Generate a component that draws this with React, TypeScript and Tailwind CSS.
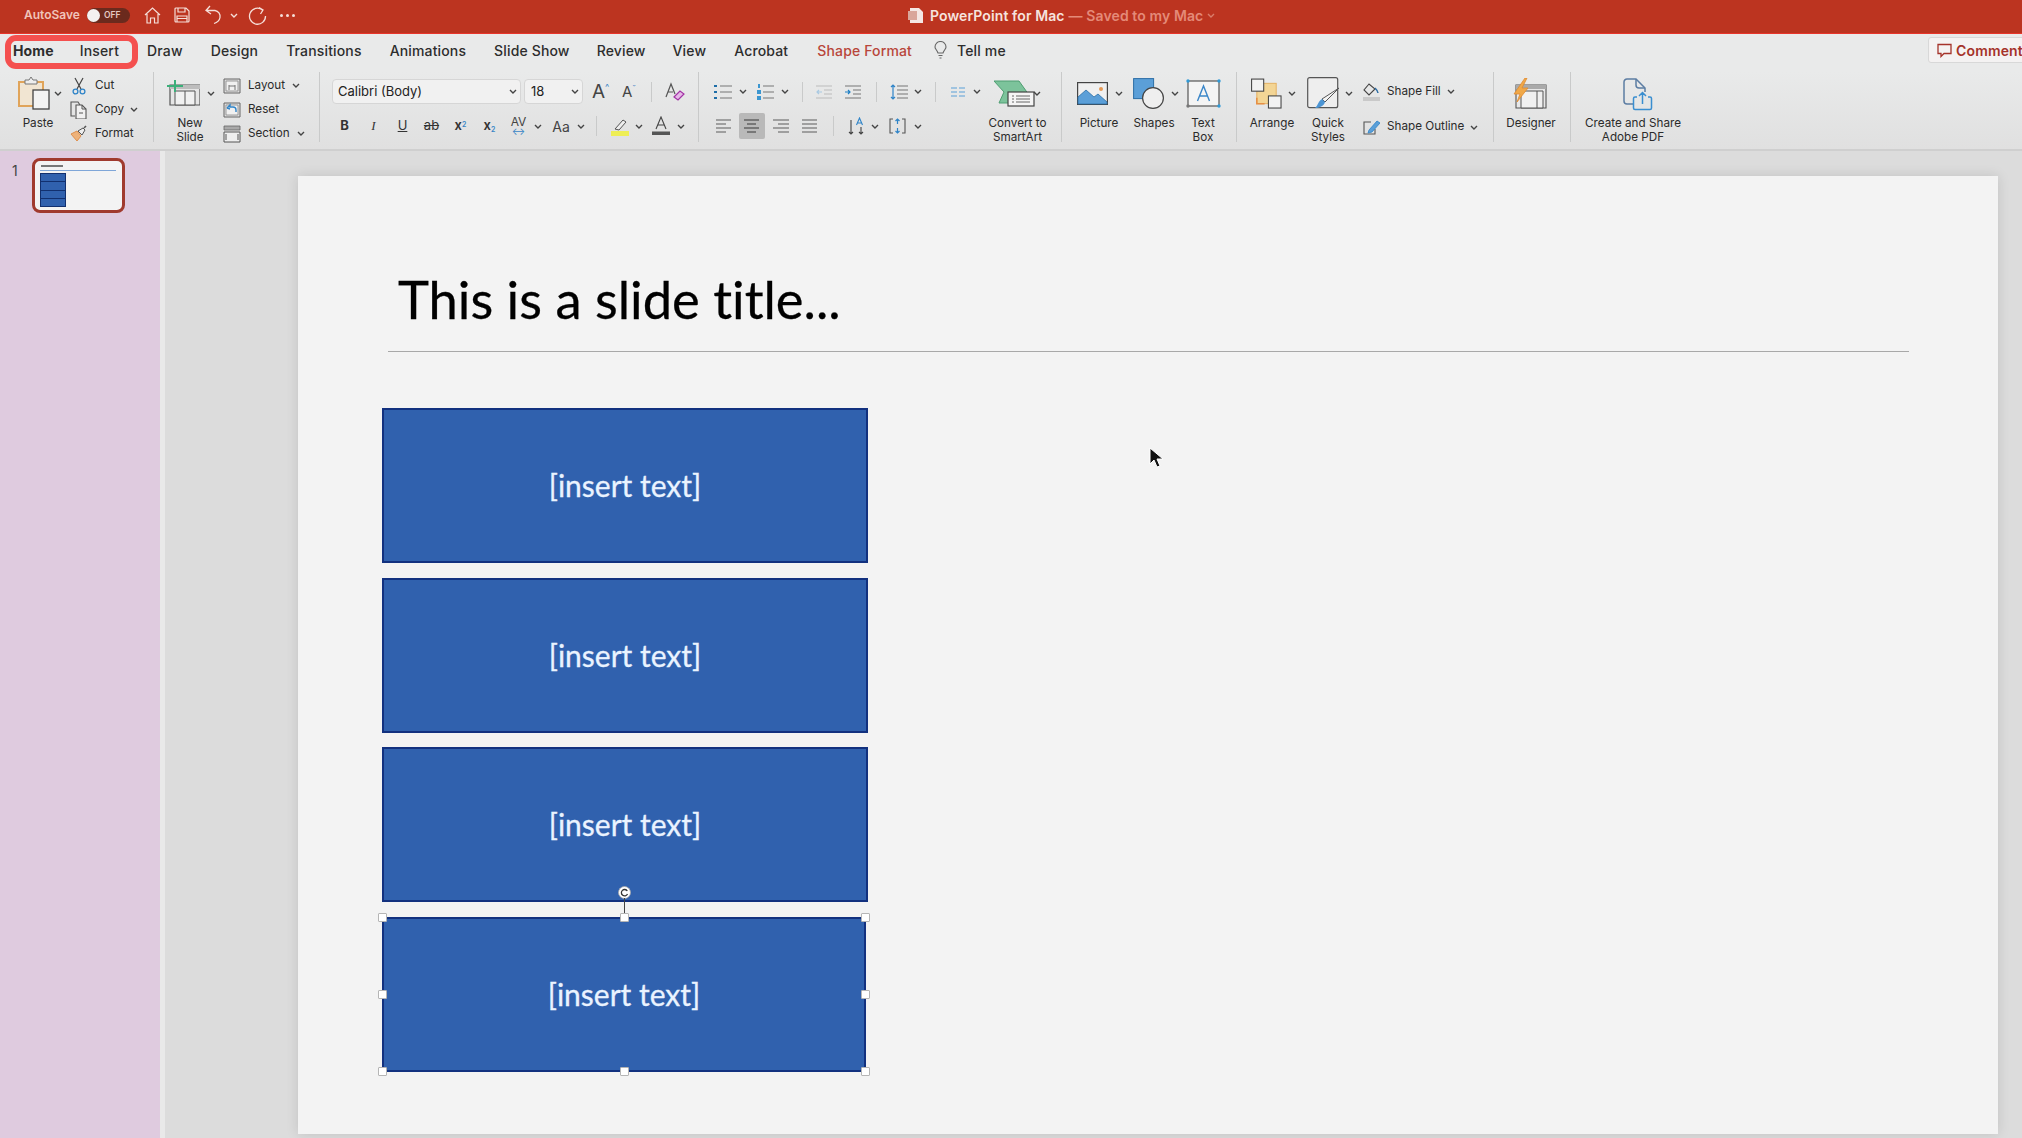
import type { ReactNode } from "react";

const ui = "font-['Inter','Liberation_Sans',sans-serif]";
const calibri = "font-['Lato','Open_Sans',sans-serif] [font-variant-ligatures:none] [-webkit-text-stroke:0.3px]";

function Chev({ className = "", color = "#444" }: { className?: string; color?: string }) {
  return (
    <svg width="8" height="5" viewBox="0 0 8 5" className={`shrink-0 ${className}`}>
      <path d="M1 1l3 3 3-3" fill="none" stroke={color} strokeWidth="1.4" />
    </svg>
  );
}

function Sep({ className = "" }: { className?: string }) {
  return <div className={`w-px shrink-0 bg-[#c9caca] ${className}`} />;
}

function Big({ className, iconClass, label, children }: { className: string; iconClass: string; label: ReactNode; children: ReactNode }) {
  return (
    <div className={`flex shrink-0 flex-col ${className}`}>
      <div className={`mb-[2px] flex h-[42px] items-center ${iconClass}`}>{children}</div>
      <div className="whitespace-nowrap text-center text-[11.7px] leading-[14px] text-[#2b2b2b]">{label}</div>
    </div>
  );
}

function SmallRow({ icon, label, chev }: { icon: ReactNode; label: string; chev?: string }) {
  return (
    <div className="flex h-[24px] items-center">
      <div className="flex w-[18px] justify-center">{icon}</div>
      <span className="ml-[7px] text-[11.7px] text-[#2b2b2b]">{label}</span>
      {chev && <Chev className={chev} />}
    </div>
  );
}

function Lines({ w = 16, rows, stroke = "#7a7a7a" }: { w?: number; rows: [number, number][]; stroke?: string }) {
  return (
    <svg width={w} height="16" viewBox={`0 0 ${w} 16`} className="shrink-0">
      {rows.map(([a, b], i) => (
        <path key={i} d={`M${a} ${2 + i * 4}H${b}`} stroke={stroke} strokeWidth="1.3" />
      ))}
    </svg>
  );
}

function PasteIcon() {
  return (
    <svg width="32" height="34" viewBox="0 0 32 34">
      <path d="M1 30V6h24v24z" fill="#f1e5d2" stroke="#e0a45a" strokeWidth="2" />
      <path d="M7 8V4h4l2-3 2 3h4v4z" fill="#eee" stroke="#777" strokeWidth="1" />
      <rect x="15" y="14" width="16" height="19" fill="#f3f3f3" stroke="#444" strokeWidth="1.3" />
    </svg>
  );
}

function CutIcon() {
  return (
    <svg width="14" height="18" viewBox="0 0 14 18">
      <path d="M3 1l6 11M11 1L5 12" stroke="#444" strokeWidth="1.2" fill="none" />
      <circle cx="3.5" cy="14.5" r="2.4" fill="none" stroke="#2f84c8" strokeWidth="1.3" />
      <circle cx="10.5" cy="14.5" r="2.4" fill="none" stroke="#2f84c8" strokeWidth="1.3" />
    </svg>
  );
}

function CopyIcon() {
  return (
    <svg width="18" height="18" viewBox="0 0 18 18">
      <path d="M5 15H1V1h7l2 3" fill="none" stroke="#555" strokeWidth="1.1" />
      <path d="M6 4h6l4 4v10H6z" fill="#f1f1f1" stroke="#555" strokeWidth="1.1" />
      <path d="M12 4v4h4M9 12h4" fill="none" stroke="#555" strokeWidth="1" />
    </svg>
  );
}

function FormatIcon() {
  return (
    <svg width="18" height="17" viewBox="0 0 18 17">
      <path d="M1 9l6-3 4 5-4 5z" fill="#eeb27a" stroke="#df8f4c" strokeWidth="1" />
      <path d="M8 6l5-3 2 2-3 5z" fill="#eee" stroke="#555" strokeWidth="1" />
      <path d="M14 3l2-2" stroke="#555" strokeWidth="1.6" />
    </svg>
  );
}

function NewSlideIcon() {
  return (
    <svg width="33" height="26" viewBox="0 0 33 26">
      <path d="M3 5h30v20H3z" fill="#e6e6e6" stroke="#555" strokeWidth="1.2" />
      <path d="M3 5h30v4H3z" fill="#bdbdbd" />
      <path d="M8 11h20v14H8zM18 11v14" fill="#f1f1f1" stroke="#555" strokeWidth="1" />
      <path d="M0 6h16M8 0v12" stroke="#3bb07a" strokeWidth="2" />
    </svg>
  );
}

function SlotIcon({ kind }: { kind: "layout" | "reset" | "section" }) {
  return (
    <svg width="18" height="18" viewBox="0 0 18 18">
      {kind === "section" ? (
        <>
          <path d="M1 1h16v4H1z" fill="#a9a9a9" stroke="#666" strokeWidth=".8" />
          <path d="M1 7h16v10H1z" fill="#eee" stroke="#555" strokeWidth="1" />
          <path d="M3 9v6M15 9v6" stroke="#555" strokeWidth="1" />
        </>
      ) : (
        <>
          <path d="M1 2h16v14H1z" fill="#ddd" stroke="#666" strokeWidth="1" />
          <path d="M3 4h12v10H3z" fill="#f1f1f1" stroke="#888" strokeWidth=".8" />
          {kind === "layout" && <path d="M6 8v5M12 8v5M6 9h6" stroke="#777" strokeWidth="1" fill="none" />}
          {kind === "reset" && <path d="M4 7l3-3v2h3a3 3 0 0 1 3 3v2M7 8L4 7" stroke="#2f84c8" strokeWidth="1.4" fill="none" />}
        </>
      )}
    </svg>
  );
}

function PictureIcon() {
  return (
    <svg width="31" height="23" viewBox="0 0 31 23">
      <rect x=".6" y=".6" width="29.8" height="21.8" fill="#f0f0f0" stroke="#444" strokeWidth="1.2" />
      <path d="M1 22V15l8-7 8 7 4-3 9 8v2z" fill="#5b9fd8" stroke="#2c6ea6" strokeWidth=".8" />
      <circle cx="24" cy="7" r="2" fill="#e79a55" />
    </svg>
  );
}

function ShapesIcon() {
  return (
    <svg width="31" height="31" viewBox="0 0 31 31">
      <rect x=".6" y=".6" width="20" height="20" fill="#5b9fd8" stroke="#2c6ea6" strokeWidth="1" />
      <circle cx="20" cy="20" r="10.4" fill="#efefef" stroke="#444" strokeWidth="1.2" />
    </svg>
  );
}

function TextBoxIcon() {
  return (
    <svg width="35" height="29" viewBox="0 0 35 29">
      <rect x="2" y="2" width="31" height="25" fill="#f4f4f4" stroke="#555" strokeWidth="1.2" />
      <path d="M11.5 22l6-15 6 15M13.6 17h8" fill="none" stroke="#3a86c8" strokeWidth="1.4" />
      <circle cx="2" cy="2" r="1.7" fill="#2f9ad8" />
      <circle cx="33" cy="2" r="1.7" fill="#2f9ad8" />
      <circle cx="2" cy="27" r="1.7" fill="#777" />
      <circle cx="33" cy="27" r="1.7" fill="#2f9ad8" />
    </svg>
  );
}

function ArrangeIcon() {
  return (
    <svg width="32" height="31" viewBox="0 0 32 31">
      <rect x="6" y="5" width="20" height="21" fill="#f3d595" stroke="#e5b060" strokeWidth="1" />
      <path d="M6 20v6h8" fill="none" stroke="#e68f45" strokeWidth="1.6" />
      <rect x=".6" y=".6" width="12.5" height="12.5" fill="#f2f2f2" stroke="#444" strokeWidth="1.1" />
      <rect x="18" y="18" width="13" height="12.5" fill="#f2f2f2" stroke="#444" strokeWidth="1.1" />
    </svg>
  );
}

function QuickStylesIcon() {
  return (
    <svg width="33" height="33" viewBox="0 0 33 33">
      <rect x=".7" y=".7" width="30" height="30" rx="2" fill="#eeeeee" stroke="#555" strokeWidth="1.2" />
      <path d="M32 11L18 25l-3-3z" fill="#f4f4f4" stroke="#555" strokeWidth="1" />
      <path d="M15 22l3 3c-1 4-6 6-10 6 3-2 3-7 7-9z" fill="#4c95d4" />
    </svg>
  );
}

function ConvertIcon() {
  return (
    <svg width="41" height="27" viewBox="0 0 41 27">
      <path d="M0 1h25l10 14H25v8H5l5-11z" fill="#7cc39b" stroke="#4f9e72" strokeWidth="1" />
      <rect x="14" y="12" width="26" height="14" fill="#f5f5f5" stroke="#444" strokeWidth="1.2" />
      <path d="M18 16h2M22 16h14M18 19h2M22 19h14M18 22h2M22 22h14" stroke="#666" strokeWidth="1" />
    </svg>
  );
}

function DesignerIcon() {
  return (
    <svg width="34" height="31" viewBox="0 0 34 31">
      <path d="M3 7h30v23H3z" fill="#e8e8e8" stroke="#555" strokeWidth="1.1" />
      <path d="M3 7h30v4H3z" fill="#aaa" />
      <path d="M8 13h22v17H8zM24 13v17" fill="#f0f0f0" stroke="#555" strokeWidth="1" />
      <path d="M12 0L1 16h6l-3 8L15 10H9l5-10z" fill="#f0a848" stroke="#e08a30" strokeWidth=".8" />
    </svg>
  );
}

function PdfIcon() {
  return (
    <svg width="30" height="33" viewBox="0 0 30 33" className="mt-[3px]">
      <path d="M10 26H4a3 3 0 0 1-3-3V4a3 3 0 0 1 3-3h9l9 9v4" fill="none" stroke="#5c7da3" strokeWidth="1.5" />
      <path d="M13 1v6a3 3 0 0 0 3 3h6" fill="none" stroke="#5c7da3" strokeWidth="1.5" />
      <path d="M14 19h-2a1.500 1.500 0 0 0-1.500 1.500V30a1.500 1.500 0 0 0 1.500 1.500h15a1.500 1.500 0 0 0 1.500-1.500v-9.500A1.500 1.500 0 0 0 27 19h-2M19.500 26V15M16 18l3.500-3.500L23 18" fill="none" stroke="#3a8ed0" strokeWidth="1.5" />
    </svg>
  );
}

function IconButton({ children, className = "" }: { children: ReactNode; className?: string }) {
  return <div className={`flex shrink-0 items-center justify-center ${className}`}>{children}</div>;
}

function TitleBar() {
  return (
    <div className={`flex h-[34px] items-center border-b border-[#e8352a] bg-[#bc3420] pb-[3px] ${ui}`}>
      <span className="ml-[24px] w-[58px] whitespace-nowrap text-[12px] font-semibold text-[#f0c4ba]">AutoSave</span>
      <div className="ml-[5px] flex h-[15px] w-[43px] items-center rounded-full bg-[#6b2a1d]">
        <div className="h-[13px] w-[13px] rounded-full bg-[#f4f1f0]" />
        <span className="ml-[4px] text-[8.500px] font-semibold text-[#e5c9c2]">OFF</span>
      </div>
      <svg width="17" height="17" viewBox="0 0 17 17" className="ml-[14px]" fill="none" stroke="#f5ded8" strokeWidth="1.200">
        <path d="M1 8l7.500-7L16 8M3 7v9h3.500v-5h4v5H14V7" />
      </svg>
      <svg width="16" height="16" viewBox="0 0 16 16" className="ml-[13px]" fill="none" stroke="#f5ded8" strokeWidth="1.200">
        <path d="M1 2a1 1 0 0 1 1-1h10l3 3v10a1 1 0 0 1-1 1H2a1 1 0 0 1-1-1zM4 1v4h7V1M3 15V9h10v6M3 11.500h10" />
      </svg>
      <svg width="18" height="20" viewBox="0 0 18 20" className="ml-[15px]" fill="none" stroke="#f5ded8" strokeWidth="1.300">
        <path d="M5 1L1 5.500 6 9M1 5.500h9a6 6 0 0 1 5 7c-.5 3-3 5-6 6" />
      </svg>
      <Chev className="ml-[7px]" color="#f5ded8" />
      <svg width="19" height="19" viewBox="0 0 19 19" className="ml-[10px]" fill="none" stroke="#f5ded8" strokeWidth="1.300">
        <path d="M14.500 4A8 8 0 1 0 17.500 10M11 1.500l4 2.500-2.500 4" />
      </svg>
      <div className="ml-[13px] flex gap-[3px]">
        <div className="h-[3px] w-[3px] rounded-full bg-[#f5ded8]" />
        <div className="h-[3px] w-[3px] rounded-full bg-[#f5ded8]" />
        <div className="h-[3px] w-[3px] rounded-full bg-[#f5ded8]" />
      </div>
      <svg width="16" height="17" viewBox="0 0 16 17" className="ml-[613px]">
        <path d="M2 1h9l4 4v11H2z" fill="#f4e7e4" />
        <rect x="0" y="4" width="9" height="9" fill="#d9a69b" />
      </svg>
      <span className="ml-[6px] whitespace-nowrap text-[14px] font-semibold tracking-[0.1px] text-[#f6e3de]">PowerPoint for Mac</span>
      <span className="ml-[4px] whitespace-nowrap text-[14px] font-semibold tracking-[0.1px] text-[#e48a78]">— Saved to my Mac</span>
      <Chev className="ml-[4px]" color="#d97d6b" />
    </div>
  );
}

function Tabs() {
  return (
    <div className={`relative flex h-[38px] items-center bg-[#e9eaea] pb-[6px] pl-[13px] text-[14px] font-medium tracking-[0.15px] text-[#2d2d2d] ${ui}`}>
      <span className="font-bold">Home</span>
      <span className="ml-[26px]">Insert</span>
      <span className="ml-[28px]">Draw</span>
      <span className="ml-[28px]">Design</span>
      <span className="ml-[28px]">Transitions</span>
      <span className="ml-[28px]">Animations</span>
      <span className="ml-[28px]">Slide Show</span>
      <span className="ml-[27px]">Review</span>
      <span className="ml-[27px]">View</span>
      <span className="ml-[28px]">Acrobat</span>
      <span className="ml-[29px] text-[#b8463a]">Shape Format</span>
      <svg width="13" height="18" viewBox="0 0 13 18" className="ml-[22px]" fill="none" stroke="#666" strokeWidth="1.100">
        <path d="M4 12C3 9 1 8 1 6a5.500 5.500 0 0 1 11 0c0 2-2 3-3 6zM4.500 14.500h4M5.500 17h2" />
      </svg>
      <span className="ml-[10px]">Tell me</span>
      <div className="ml-auto -mr-[20px] flex h-[26px] w-[114px] items-center rounded-[3px] border border-[#d8d8d8] bg-[#f4f2f2] pl-[8px] font-semibold text-[#a5332a]">
        <svg width="15" height="15" viewBox="0 0 15 15" className="shrink-0" fill="none" stroke="#a5332a" strokeWidth="1.300">
          <path d="M1 1.500h13v9H7l-3 3v-3H1z" />
        </svg>
        <span className="ml-[4px]">Comments</span>
      </div>
      <div className="absolute left-[5px] top-[1px] h-[34px] w-[133px] rounded-[11px] border-[6px] border-[#f4504f]" />
    </div>
  );
}

function ClipboardGroup() {
  return (
    <>
      <Big className="ml-[14px] w-[48px]" iconClass="pl-[4px]" label="Paste">
        <PasteIcon />
        <Chev className="ml-[4px]" />
      </Big>
      <div className="ml-[8px] flex w-[83px] shrink-0 flex-col pt-[1.500px]">
        <SmallRow icon={<CutIcon />} label="Cut" />
        <SmallRow icon={<CopyIcon />} label="Copy" chev="ml-[6px]" />
        <SmallRow icon={<FormatIcon />} label="Format" />
      </div>
      <Sep className="h-[70px]" />
    </>
  );
}

function SlidesGroup() {
  return (
    <>
      <Big
        className="ml-[10px] w-[52px]"
        iconClass="pl-[3px]"
        label={
          <>
            New
            <br />
            Slide
          </>
        }
      >
        <NewSlideIcon />
        <Chev className="ml-[7px]" />
      </Big>
      <div className="ml-[7px] flex w-[96px] shrink-0 flex-col pt-[1.500px]">
        <SmallRow icon={<SlotIcon kind="layout" />} label="Layout" chev="ml-[7px]" />
        <SmallRow icon={<SlotIcon kind="reset" />} label="Reset" />
        <SmallRow icon={<SlotIcon kind="section" />} label="Section" chev="ml-[7px]" />
      </div>
      <Sep className="h-[70px]" />
    </>
  );
}

function FontGroup() {
  const cell = "w-[29px] shrink-0 text-center text-[#333]";
  return (
    <div className="flex w-[378px] shrink-0 flex-col pt-[7px]">
      <div className="flex h-[25px] items-center">
        <div className="ml-[12px] flex h-[25px] w-[189px] items-center justify-between rounded-[4px] border border-[#d6d6d6] bg-[#f1f1f1] pl-[5px] pr-[3px] text-[13px] text-[#222]">
          Calibri (Body)
          <Chev />
        </div>
        <div className="ml-[3px] flex h-[25px] w-[59px] items-center justify-between rounded-[4px] border border-[#d6d6d6] bg-[#f1f1f1] pl-[6px] pr-[3px] text-[13px] text-[#222]">
          18
          <Chev />
        </div>
        <div className="ml-[9px] flex w-[22px] items-start text-[19px] leading-none text-[#444]">
          A<span className="text-[9px] text-[#3b86c6]">^</span>
        </div>
        <div className="ml-[8px] flex w-[20px] items-start text-[15px] leading-none text-[#444]">
          A<span className="text-[9px] text-[#3b86c6]">ˇ</span>
        </div>
        <Sep className="ml-[9px] h-[20px]" />
        <svg width="20" height="20" viewBox="0 0 20 20" className="ml-[13px]" fill="none">
          <path d="M1 15L6 2l4 10M3 10h5" stroke="#555" strokeWidth="1.200" />
          <path d="M9 15l6-6 4 3-6 6z" fill="#e6b8e8" stroke="#a332a5" strokeWidth="1.200" />
        </svg>
      </div>
      <div className="mt-[9px] flex h-[26px] items-center pl-[10px] text-[13px]">
        <span className={`${cell} font-bold`}>B</span>
        <span className={`${cell} font-['Liberation_Serif',serif] italic`}>I</span>
        <span className={`${cell} underline`}>U</span>
        <span className={`${cell} line-through`}>ab</span>
        <span className={`${cell} font-semibold`}>
          x<sup className="text-[7px] text-[#3b86c6]">2</sup>
        </span>
        <span className={`${cell} font-semibold`}>
          x<sub className="text-[7px] text-[#3b86c6]">2</sub>
        </span>
        <span className="flex w-[29px] shrink-0 flex-col items-center text-[12px] leading-[10px] text-[#444]">
          AV
          <span className="text-[10px] leading-[8px] text-[#3b86c6]">↔</span>
        </span>
        <Chev className="ml-[1px]" />
        <span className="ml-[4px] w-[30px] text-center text-[14px] text-[#444]">Aa</span>
        <Chev className="ml-[1px]" />
        <Sep className="ml-[11px] h-[20px]" />
        <svg width="18" height="20" viewBox="0 0 18 20" className="ml-[14px]">
          <path d="M4 13l8-9 3 2-7 8z" fill="#eee" stroke="#555" strokeWidth="1" />
          <rect x="0" y="15" width="18" height="5" fill="#eeee55" />
        </svg>
        <Chev className="ml-[6px]" />
        <svg width="18" height="20" viewBox="0 0 18 20" className="ml-[9px]">
          <path d="M4 13L9 1l5 12M5.500 9h7" fill="none" stroke="#444" strokeWidth="1.100" />
          <rect x="0" y="15.500" width="18" height="3.500" fill="#555" />
        </svg>
        <Chev className="ml-[7px]" />
      </div>
    </div>
  );
}

function ParagraphGroup() {
  const full: [number, number][] = [
    [0, 15],
    [0, 15],
    [0, 15],
    [0, 15],
  ];
  return (
    <div className="flex w-[286px] shrink-0 flex-col pt-[7px]">
      <div className="flex h-[25px] items-center">
        <svg width="18" height="16" viewBox="0 0 18 16" className="ml-[15px]">
          <path d="M6 2h12M6 8h12M6 14h12" stroke="#777" strokeWidth="1.200" />
          <path d="M0 1h3v2H0zM0 7h3v2H0zM0 13h3v2H0z" fill="#1e6ea8" />
        </svg>
        <Chev className="ml-[7px]" />
        <svg width="17" height="16" viewBox="0 0 17 16" className="ml-[10px]">
          <path d="M6 2h11M6 8h11M6 14h11" stroke="#777" strokeWidth="1.200" />
          <path d="M1 0h2v4H1zM0 6h4v4H0zM0 12h4v4H0z" fill="#3b96d0" />
        </svg>
        <Chev className="ml-[7px]" />
        <Sep className="ml-[13px] h-[20px]" />
        <svg width="16" height="16" viewBox="0 0 16 16" className="ml-[13px]">
          <path d="M0 2h16M8 6h8M8 10h8M0 14h16" stroke="#bbb" strokeWidth="1.200" />
          <path d="M6 8H1M3 6L1 8l2 2" fill="none" stroke="#a9c9e2" strokeWidth="1.200" />
        </svg>
        <svg width="16" height="16" viewBox="0 0 16 16" className="ml-[13px]">
          <path d="M0 2h16M8 6h8M8 10h8M0 14h16" stroke="#777" strokeWidth="1.200" />
          <path d="M0 8h5M3 6l2 2-2 2" fill="none" stroke="#1d7fc4" strokeWidth="1.200" />
        </svg>
        <Sep className="ml-[15px] h-[20px]" />
        <svg width="18" height="16" viewBox="0 0 18 16" className="ml-[13px]">
          <path d="M7 2h11M7 6h11M7 10h11M7 14h11" stroke="#777" strokeWidth="1.200" />
          <path d="M3 1v14M1 3l2-2 2 2M1 13l2 2 2-2" fill="none" stroke="#2f84c8" strokeWidth="1.200" />
        </svg>
        <Chev className="ml-[6px]" />
        <Sep className="ml-[13px] h-[20px]" />
        <svg width="14" height="10" viewBox="0 0 14 10" className="ml-[15px]">
          <path d="M0 1h6M8 1h6M0 5h6M8 5h6M0 9h6M8 9h6" stroke="#5b9fd8" strokeWidth="1.100" />
        </svg>
        <Chev className="ml-[8px]" />
      </div>
      <div className="mt-[9px] flex h-[26px] items-center">
        <IconButton className="ml-[17px] w-[15px]">
          <Lines w={15} rows={[[0, 15], [0, 10], [0, 15], [0, 10]]} />
        </IconButton>
        <IconButton className="ml-[8px] h-[26px] w-[26px] rounded-[2px] bg-[#b9b9b9]">
          <Lines rows={[[0, 15], [3, 12], [0, 15], [3, 12]]} stroke="#555" />
        </IconButton>
        <IconButton className="ml-[8px] w-[16px]">
          <Lines rows={[[0, 16], [5, 16], [0, 16], [5, 16]]} />
        </IconButton>
        <IconButton className="ml-[13px] w-[16px]">
          <Lines rows={full} />
        </IconButton>
        <Sep className="ml-[15px] h-[20px]" />
        <svg width="16" height="18" viewBox="0 0 16 18" className="ml-[14px]" fill="none">
          <path d="M3 3v14M1 15l2 2 2-2M13 10v7M11 15l2 2 2-2" stroke="#444" strokeWidth="1.100" />
          <path d="M8.500 8l3-7 3 7M9.500 6h4" stroke="#2f84c8" strokeWidth="1.100" />
        </svg>
        <Chev className="ml-[7px]" />
        <svg width="17" height="16" viewBox="0 0 17 16" className="ml-[10px]" fill="none">
          <path d="M4 1H1v14h3M13 1h3v14h-3" stroke="#555" strokeWidth="1.100" />
          <path d="M8.500 1v5M6.500 3l2-2 2 2M8.500 15v-5M6.500 13l2 2 2-2" stroke="#2f84c8" strokeWidth="1.200" />
        </svg>
        <Chev className="ml-[8px]" />
      </div>
    </div>
  );
}

function ShapeStyleGroup() {
  return (
    <div className="ml-[9px] flex w-[130px] shrink-0 flex-col pt-[7px]">
      <div className="flex h-[25px] items-center">
        <svg width="17" height="20" viewBox="0 0 17 20" fill="none">
          <path d="M6 2L1 8l5 5 6-6z" stroke="#444" strokeWidth="1.100" />
          <path d="M12 6c2 2 3 3 3 5" stroke="#2c6ea6" strokeWidth="1.500" />
          <rect x="0" y="15" width="17" height="4" fill="#c9c9c9" />
        </svg>
        <span className="ml-[7px] text-[11.7px] text-[#2b2b2b]">Shape Fill</span>
        <Chev className="ml-[6px]" />
      </div>
      <div className="mt-[10px] flex h-[26px] items-center">
        <svg width="17" height="15" viewBox="0 0 17 15" fill="none">
          <path d="M8 2H1v12h11V9" stroke="#555" strokeWidth="1.100" />
          <path d="M6 10l8-9 3 2-8 9-4 1z" fill="#5b9fd8" stroke="#2f84c8" strokeWidth=".8" />
        </svg>
        <span className="ml-[7px] text-[11.7px] text-[#2b2b2b]">Shape Outline</span>
        <Chev className="ml-[6px]" />
      </div>
    </div>
  );
}

function Ribbon() {
  return (
    <div className={`flex h-[79px] border-b-2 border-[#cfcfcf] bg-gradient-to-b from-[#e9eaea] to-[#e0e0e0] ${ui}`}>
      <ClipboardGroup />
      <SlidesGroup />
      <FontGroup />
      <Sep className="h-[70px]" />
      <ParagraphGroup />
      <Big
        className="w-[65px]"
        iconClass="pl-[9px]"
        label={
          <>
            Convert to
            <br />
            SmartArt
          </>
        }
      >
        <ConvertIcon />
        <Chev className="ml-[-2px]" />
      </Big>
      <Sep className="ml-[11px] h-[70px]" />
      <Big className="ml-[10px] w-[54px]" iconClass="pl-[5px]" label="Picture">
        <PictureIcon />
        <Chev className="ml-[7px]" />
      </Big>
      <Big className="w-[56px]" iconClass="pl-[7px]" label="Shapes">
        <ShapesIcon />
        <Chev className="ml-[7px]" />
      </Big>
      <Big
        className="w-[42px]"
        iconClass="pl-[4px]"
        label={
          <>
            Text
            <br />
            Box
          </>
        }
      >
        <TextBoxIcon />
      </Big>
      <Sep className="ml-[12px] h-[70px]" />
      <Big className="ml-[11px] w-[48px]" iconClass="pl-[3px]" label="Arrange">
        <ArrangeIcon />
        <Chev className="ml-[6px]" />
      </Big>
      <Big
        className="ml-[6px] w-[52px]"
        iconClass="pl-[5px]"
        label={
          <>
            Quick
            <br />
            Styles
          </>
        }
      >
        <QuickStylesIcon />
        <Chev className="ml-[5px]" />
      </Big>
      <ShapeStyleGroup />
      <Sep className="h-[70px]" />
      <Big className="w-[74px]" iconClass="pl-[19px]" label="Designer">
        <DesignerIcon />
      </Big>
      <Sep className="ml-[2px] h-[70px]" />
      <Big
        className="w-[124px]"
        iconClass="pl-[52px]"
        label={
          <>
            Create and Share
            <br />
            Adobe PDF
          </>
        }
      >
        <PdfIcon />
      </Big>
    </div>
  );
}

function Sidebar() {
  return (
    <div className={`flex w-[160px] shrink-0 items-start bg-[#dfcbdf] pl-[12px] pt-[7px] ${ui}`}>
      <span className="mt-[2px] text-[14px] text-[#444]">1</span>
      <div className="ml-[14px] h-[55px] w-[93px] rounded-[8px] border-[3px] border-[#a03a2e] bg-[#f4f4f4] p-[1px]">
        <div className="h-full rounded-[5px] bg-[#f3f3f3] pl-[4px] pt-[3px]">
          <div className="ml-[1px] h-[2px] w-[22px] bg-[#777]" />
          <div className="mt-[3px] h-[1px] w-[76px] bg-[#7fa6d8]" />
          <div className="mt-[2px] flex h-[34px] w-[26px] flex-col gap-[1px] bg-[#12306f] p-[1px]">
            <div className="flex-1 bg-[#3061ae]" />
            <div className="flex-1 bg-[#3061ae]" />
            <div className="flex-1 bg-[#3061ae]" />
            <div className="flex-1 bg-[#3061ae]" />
          </div>
        </div>
      </div>
    </div>
  );
}

function BlueBox({ selected = false }: { selected?: boolean }) {
  return (
    <div className={`flex h-[155px] shrink-0 items-center justify-center border-2 border-[#12317f] bg-[#3061ae] text-[30px] text-[#eaf3ff] ${calibri} ${selected ? "w-[484px]" : "w-[486px]"}`}>
      [insert text]
    </div>
  );
}

const handle = "absolute h-[9px] w-[9px] rounded-[1px] border border-[#b5b5b5] bg-white";

function SelectedBox() {
  return (
    <div className="relative w-[484px]">
      <BlueBox selected />
      <svg width="13" height="13" viewBox="0 0 13 13" className="absolute left-[236px] top-[-31px]">
        <circle cx="6.500" cy="6.500" r="6" fill="#fff" stroke="#aaa" strokeWidth=".8" />
        <path d="M9.300 5A3.200 3.200 0 1 0 9.500 8" fill="none" stroke="#333" strokeWidth="1.300" />
      </svg>
      <div className="absolute left-[242px] top-[-19px] h-[19px] w-px bg-[#444]" />
      <div className={`${handle} left-[-4px] top-[-4px]`} />
      <div className={`${handle} left-[238px] top-[-4px]`} />
      <div className={`${handle} right-[-4px] top-[-4px]`} />
      <div className={`${handle} left-[-4px] top-[73px]`} />
      <div className={`${handle} right-[-4px] top-[73px]`} />
      <div className={`${handle} bottom-[-4px] left-[-4px]`} />
      <div className={`${handle} bottom-[-4px] left-[238px]`} />
      <div className={`${handle} bottom-[-4px] right-[-4px]`} />
    </div>
  );
}

function Slide() {
  return (
    <div className="relative ml-[133px] h-[958px] w-[1700px] shrink-0 bg-[#f3f3f3] shadow-[0_0_12px_rgba(0,0,0,0.12)]">
      <h1 className={`ml-[100px] mt-[88px] h-[70px] text-[52.500px] leading-[70px] text-black ${calibri}`}>This is a slide title...</h1>
      <div className="ml-[90px] mt-[17px] h-px w-[1521px] bg-[#a8a8a8]" />
      <div className="ml-[84px] mt-[56px] flex flex-col gap-[14.6px]">
        <BlueBox />
        <BlueBox />
        <BlueBox />
        <SelectedBox />
      </div>
      <svg width="16" height="22" viewBox="0 0 16 22" className="absolute left-[851px] top-[271px]">
        <path d="M1 1v16l4-4 3 7 3-1-3-7h6z" fill="#111" stroke="#fff" strokeWidth="1" />
      </svg>
    </div>
  );
}

export default function App() {
  return (
    <div className="flex h-[1138px] w-[2022px] flex-col overflow-hidden">
      <TitleBar />
      <Tabs />
      <Ribbon />
      <div className="flex min-h-0 flex-1">
        <Sidebar />
        <div className="w-[5px] shrink-0 bg-[#e9e9e9]" />
        <div className="flex flex-1 items-start bg-[#dcdcdc] pt-[25px]">
          <Slide />
        </div>
      </div>
    </div>
  );
}
